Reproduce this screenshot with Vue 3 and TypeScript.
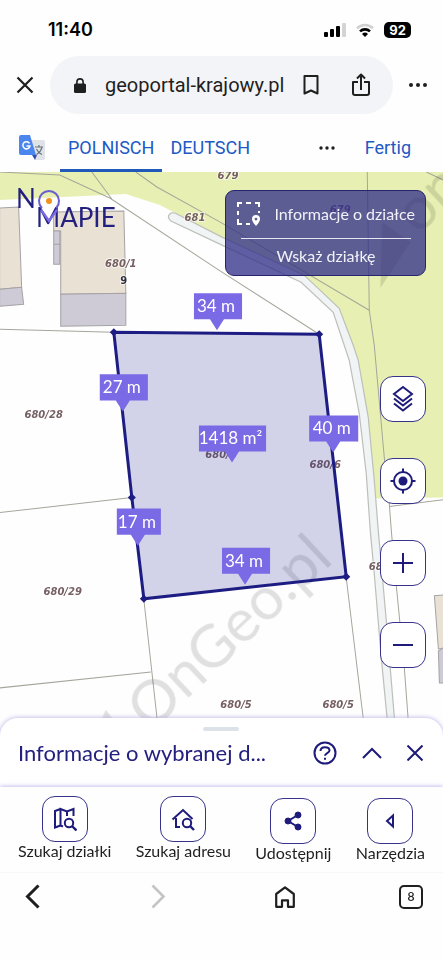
<script setup lang="ts">
interface Measure {
  text: string
  x: number
  y: number
  w: number
  tip: number
}

interface ParcelLabel {
  text: string
  x: number
  y: number
}

const measures: Measure[] = [
  { text: '34 m', x: 194, y: 293, w: 48, tip: 217 },
  { text: '27 m', x: 100, y: 374, w: 48, tip: 123 },
  { text: '1418 m²', x: 199, y: 425, w: 67, tip: 232 },
  { text: '40 m', x: 309, y: 415, w: 49, tip: 333 },
  { text: '17 m', x: 117, y: 508, w: 44, tip: 138 },
  { text: '34 m', x: 222, y: 547, w: 48, tip: 245 },
]

const parcels: ParcelLabel[] = [
  { text: '679', x: 228, y: 179 },
  { text: '679', x: 340, y: 213 },
  { text: '681', x: 195, y: 221 },
  { text: '680/1', x: 121, y: 267 },
  { text: '680/28', x: 44, y: 418 },
  { text: '680/6', x: 221, y: 457 },
  { text: '680/6', x: 325, y: 467 },
  { text: '680/29', x: 63, y: 594 },
  { text: '680/5', x: 236, y: 707 },
  { text: '680/5', x: 338, y: 707 },
  { text: '681', x: 379, y: 569 },
]

const corners: [number, number][] = [
  [114, 332],
  [319, 334],
  [346, 576],
  [144, 598],
  [132, 497],
]

const outline = corners.map((c) => c.join(',')).join(' ')
const tipPath = (m: Measure) =>
  `M${m.x} ${m.y}h${m.w}v26H${m.tip + 7}L${m.tip} ${m.y + 37}L${m.tip - 7} ${m.y + 26}H${m.x}Z`
</script>

<template>
  <div class="screen">
    <header class="browser-top">
      <div class="status">
        <span class="clock">11:40</span>
        <div class="signals">
          <svg width="22" height="14" viewBox="0 0 22 14" aria-hidden="true">
            <rect x="0" y="9" width="4" height="5" rx="1" />
            <rect x="6" y="6" width="4" height="8" rx="1" />
            <rect x="12" y="3" width="4" height="11" rx="1" />
            <rect x="18" y="0" width="4" height="14" rx="1" fill="#d4d4d4" />
          </svg>
          <svg width="18" height="14" viewBox="0 0 18 14" aria-hidden="true">
            <path d="M1 5.2a11.5 11.5 0 0 1 16 0" fill="none" stroke="#d0d0d0" stroke-width="2.6" />
            <path d="M4 8.4a7.2 7.2 0 0 1 10 0" fill="none" stroke="#000" stroke-width="2.6" />
            <path d="M6 11a4.4 4.4 0 0 1 6 0l-3 3z" />
          </svg>
          <span class="battery">92</span>
        </div>
      </div>

      <div class="address-row">
        <button class="plain" type="button" aria-label="Zamknij">
          <svg width="18" height="18" viewBox="0 0 18 18" fill="none" stroke="#1f1f1f" stroke-width="2.2">
            <path d="M1.5 1.5l15 15M16.5 1.5l-15 15" />
          </svg>
        </button>
        <div class="address">
          <svg width="12" height="15" viewBox="0 0 12 15" aria-hidden="true">
            <rect x="0" y="5.5" width="12" height="9.5" rx="1.5" fill="#1f1f1f" />
            <path d="M2.9 6V4a3.1 3.1 0 0 1 6.2 0v2" fill="none" stroke="#1f1f1f" stroke-width="1.6" />
          </svg>
          <span class="url">geoportal-krajowy.pl</span>
          <button class="plain bookmark" type="button" aria-label="Zakładka">
            <svg width="16" height="20" viewBox="0 0 16 20" fill="none" stroke="#1f1f1f" stroke-width="2">
              <path d="M1.5 1h13v17.5L8 15.5l-6.5 3z" stroke-linejoin="round" />
            </svg>
          </button>
          <button class="plain" type="button" aria-label="Udostępnij stronę">
            <svg width="18" height="24" viewBox="0 0 18 24" fill="none" stroke="#1f1f1f" stroke-width="2">
              <path d="M6 9H1v11a2 2 0 0 0 2 2h12a2 2 0 0 0 2-2V9h-5M9 17V2M5 5.5l4-4 4 4" stroke-linejoin="round" />
            </svg>
          </button>
        </div>
        <button class="plain" type="button" aria-label="Menu">
          <svg width="18" height="4" viewBox="0 0 18 4" fill="#1f1f1f">
            <circle cx="2" cy="2" r="2" /><circle cx="9" cy="2" r="2" /><circle cx="16" cy="2" r="2" />
          </svg>
        </button>
      </div>

      <div class="translate">
        <svg width="26" height="26" viewBox="0 0 26 26" aria-hidden="true">
          <path d="M10 5h14a2 2 0 0 1 2 2v16a2 2 0 0 1-2 2h-8z" fill="#dfe2e6" />
          <path d="M13 20h5l-2 5z" fill="#3050b8" />
          <path d="M2 0h9l6 20H2a2 2 0 0 1-2-2V2a2 2 0 0 1 2-2z" fill="#4a86ee" />
          <path d="M10.5 8.3A3.6 3.6 0 1 0 11 11H7.5" fill="none" stroke="#fff" stroke-width="1.5" />
          <path d="M16 12h8M20 10v2M23 12c-1 4-3 6-5.5 7.5M17.5 14c1 2.5 3 4.5 5.5 5.5" fill="none" stroke="#68767e" stroke-width="1.2" />
        </svg>
        <div class="languages">
          <button class="lang active" type="button">POLNISCH</button>
          <button class="lang" type="button">DEUTSCH</button>
        </div>
        <button class="plain more" type="button" aria-label="Opcje tłumaczenia">
          <svg width="16" height="4" viewBox="0 0 16 4" fill="#1f1f1f">
            <circle cx="2" cy="2" r="1.7" /><circle cx="8" cy="2" r="1.7" /><circle cx="14" cy="2" r="1.7" />
          </svg>
        </button>
        <button class="done" type="button">Fertig</button>
      </div>
    </header>

    <main class="map">
      <svg class="map-canvas" viewBox="0 172 443 562" preserveAspectRatio="xMidYMin slice" role="img" aria-label="Mapa działek">
        <rect x="0" y="172" width="443" height="562" fill="#fefefe" />
        <path d="M0 172H443V497L376 498L374 480L368 417L358 360L353 345L339 308L304 275L222 237L160 205L126 194L0 200Z" fill="#e7f0b2" />
        <path d="M222 237L304 275L339 308L353 345L358 360L368 417L374 480L378 530L386 620L396 740H389L381 657L374 573L370 530L366 473L359 413L349 360L344 345L333 312L301 282L222 245L171 221Q166 217 171 213Q174 212 177 214Z" fill="#f0f4f4" stroke="#bdbfb9" stroke-width="1.2" />

        <g stroke="#a5a3a5" stroke-width="1">
          <path d="M0 208L19 207L22 287L0 289Z" fill="#e9e1d3" />
          <path d="M0 289L22 287L24 304L0 306Z" fill="#cecad6" />
          <path d="M54 212L124 211L126 293L61 294V231H54Z" fill="#e9e1d3" />
          <path d="M54 231H60V264H54ZM54 244H60M61 294L126 293V325L61 326Z" fill="#cecad6" />
          <path d="M434 595L444 594V648H438Z" fill="#e9e1d3" />
          <path d="M438 650L444 646V682H439Z" fill="#cecad6" />
        </g>

        <g fill="none" stroke="#a5a69b" stroke-width="1">
          <path d="M0 172L60 175L110 198L222 272L319 334" />
          <path d="M92 172L112 199M136 172L157 187L222 223L369 310" />
          <path d="M367 172L369 310L374 345L384 457L389 503L391 530L396 585L404 667L409 734" />
          <path d="M426 172L443 180M389 506L443 499" />
          <path d="M0 329L114 332M0 512L132 497M0 687L151 671M144 599L159 734M346 577L365 734" />
        </g>

        <g class="watermark">
          <text transform="translate(151 732) rotate(-43)">OnGeo.pl</text>
          <text transform="translate(418 236) rotate(-43)">onGeo.pl</text>
          <path d="M106 709L126 734H94ZM382 222L410 242L380 288Z" />
        </g>

        <g class="parcel-labels">
          <text v-for="(p, i) in parcels" :key="i" :x="p.x" :y="p.y">{{ p.text }}</text>
          <text class="house" x="124" y="284">9</text>
        </g>

        <polygon :points="outline" fill="#24248f" fill-opacity="0.2" stroke="#1c1c82" stroke-width="3" />
        <path
          v-for="c in corners"
          :key="c.join()"
          :d="`M${c[0] - 4} ${c[1]}l4-4 4 4-4 4z`"
          fill="#1c1c82"
        />

        <g v-for="(m, i) in measures" :key="i">
          <path :d="tipPath(m)" fill="#7b6ae6" />
          <text class="measure" :x="m.x + m.w / 2 - 2" :y="m.y + 19">{{ m.text }}</text>
        </g>
      </svg>

      <svg class="logo" width="102" height="38" viewBox="0 0 102 38" role="img" aria-label="No Mapie">
        <text x="-2" y="18">N</text>
        <text x="18" y="37">MAPIE</text>
        <path d="M23.5 20.5L31 31L38.5 20.5" fill="none" stroke="#7b6ae6" stroke-width="2.4" />
        <path d="M23.5 17.5A10 10 0 1 1 38.5 17.5" fill="none" stroke="#6a5ed0" stroke-width="2" />
        <circle cx="31" cy="11" r="3" fill="#f2921d" />
      </svg>

      <button class="pick-panel" type="button">
        <span class="pick-title">
          <svg width="24" height="24" viewBox="0 0 24 24" fill="none" stroke="#fff" stroke-width="2" aria-hidden="true">
            <path d="M1 5V1h4M9 1h5M18 1h4v4M1 9v4M1 17v5h4M9 22h4M22 9v2" />
            <path d="M19 13a4 4 0 0 1 4 4c0 3-4 7-4 7s-4-4-4-7a4 4 0 0 1 4-4zm0 2.7a1.4 1.4 0 1 0 0 2.8 1.4 1.4 0 0 0 0-2.8z" fill="#fff" fill-rule="evenodd" stroke="none" />
          </svg>
          <span>Informacje o działce</span>
        </span>
        <span class="pick-hint">Wskaż działkę</span>
      </button>

      <div class="controls">
        <button class="tile" type="button" aria-label="Warstwy">
          <svg width="22" height="28" viewBox="0 0 22 28" fill="none" stroke="#1e1b7b" stroke-width="2">
            <path d="M11 2l9 7-9 7-9-7zM2 13.5l9 7 9-7M2 18.5l9 7 9-7" />
          </svg>
        </button>
        <button class="tile" type="button" aria-label="Moja lokalizacja">
          <svg width="26" height="26" viewBox="0 0 26 26" fill="none" stroke="#1e1b7b" stroke-width="2">
            <circle cx="13" cy="13" r="9" /><circle cx="13" cy="13" r="4.5" fill="#1e1b7b" stroke="none" />
            <path d="M13 0.5v4M13 21.5v4M0.5 13h4M21.5 13h4" />
          </svg>
        </button>
        <button class="tile" type="button" aria-label="Przybliż">
          <svg width="20" height="20" viewBox="0 0 20 20" stroke="#1e1b7b" stroke-width="2"><path d="M0 10h20M10 0v20" /></svg>
        </button>
        <button class="tile" type="button" aria-label="Oddal">
          <svg width="20" height="20" viewBox="0 0 20 20" stroke="#1e1b7b" stroke-width="2"><path d="M0 10h20" /></svg>
        </button>
      </div>
    </main>

    <section class="sheet">
      <div class="handle"></div>
      <div class="sheet-row">
        <h2>Informacje o wybranej d...</h2>
        <div class="sheet-actions">
          <button class="plain" type="button" aria-label="Pomoc">
            <svg width="24" height="24" viewBox="0 0 24 24" fill="none" stroke="#1e1b7b" stroke-width="2">
              <circle cx="12" cy="12" r="10.5" />
              <path d="M7.5 10c0-2.3 2-3.7 4.5-3.7s4.5 1.3 4.5 3.3c0 2.700-4.500 2.400-4.500 5.200M12 16.800v2" />
            </svg>
          </button>
          <button class="plain" type="button" aria-label="Rozwiń">
            <svg width="20" height="12" viewBox="0 0 20 12" fill="none" stroke="#1e1b7b" stroke-width="2"><path d="M1 11l9-9 9 9" /></svg>
          </button>
          <button class="plain" type="button" aria-label="Zamknij panel">
            <svg width="16" height="16" viewBox="0 0 16 16" fill="none" stroke="#1e1b7b" stroke-width="2"><path d="M0.5 0.5l15 15M15.5 0.5l-15 15" /></svg>
          </button>
        </div>
      </div>
    </section>

    <nav class="toolbar" aria-label="Narzędzia mapy">
      <button class="tool" type="button">
        <span class="tile">
          <svg width="24" height="24" viewBox="0 0 24 24" fill="none" stroke="#1e1b7b" stroke-width="2">
            <path d="M7.5 2L2 4v16.5l5.5-2V2l6.5 2.5L20.5 2v7M7.5 18.5L10 19.5M14 4.5V9" />
            <circle cx="16" cy="16" r="4.2" /><path d="M19 19l4.5 4.5" stroke-width="2.4" />
          </svg>
        </span>
        Szukaj działki
      </button>
      <button class="tool" type="button">
        <span class="tile">
          <svg width="24" height="24" viewBox="0 0 24 24" fill="none" stroke="#1e1b7b" stroke-width="2">
            <path d="M9 20H5v-9M1.5 12.5L12 3l9.5 9" />
            <circle cx="16" cy="16" r="4.2" /><path d="M19 19l4 4" stroke-width="2.4" />
          </svg>
        </span>
        Szukaj adresu
      </button>
      <button class="tool low" type="button">
        <span class="tile">
          <svg width="18" height="20" viewBox="0 0 18 20" fill="#1e1b7b" stroke="#1e1b7b">
            <path d="M14 4L4 10l10 6" fill="none" stroke-width="2" />
            <circle cx="14" cy="4" r="3" /><circle cx="4" cy="10" r="3" /><circle cx="14" cy="16" r="3" />
          </svg>
        </span>
        Udostępnij
      </button>
      <button class="tool low" type="button">
        <span class="tile">
          <svg width="10" height="16" viewBox="0 0 10 16" fill="none" stroke="#1e1b7b" stroke-width="2"><path d="M8 2.5v11L2 8z" /></svg>
        </span>
        Narzędzia
      </button>
    </nav>

    <footer class="browser-bottom">
      <button class="plain nav" type="button" aria-label="Wstecz">
        <svg width="15" height="25" viewBox="0 0 15 25" fill="none" stroke="#1f1f1f" stroke-width="3"><path d="M13.5 1.5L2.5 12.5l11 11" /></svg>
      </button>
      <button class="plain nav" type="button" aria-label="Dalej" disabled>
        <svg width="15" height="25" viewBox="0 0 15 25" fill="none" stroke="#c4c4c4" stroke-width="2.6"><path d="M1.5 1.5l11 11-11 11" /></svg>
      </button>
      <button class="plain nav" type="button" aria-label="Strona główna">
        <svg width="20" height="22" viewBox="0 0 20 22" fill="none" stroke="#1f1f1f" stroke-width="2.2" stroke-linejoin="round">
          <path d="M1.2 8L10 1.3 18.8 8v12.8H13v-6.5H7v6.5H1.2z" />
        </svg>
      </button>
      <button class="nav tabs" type="button" aria-label="Karty: 8">8</button>
    </footer>
  </div>
</template>

<style>
body {
  margin: 0;
  background: #fefefe;
}
</style>

<style scoped>
.screen {
  display: flex;
  flex-direction: column;
  min-height: 100vh;
  background: #fefefe;
  color: #1f1f1f;
  font-family: Lato, sans-serif;
}

button {
  font: inherit;
  color: inherit;
  margin: 0;
  padding: 0;
  border: 0;
  background: none;
  cursor: pointer;
}

svg {
  display: block;
}

.plain {
  display: flex;
  flex: none;
}

.status {
  display: flex;
  align-items: center;
  justify-content: space-between;
  height: 56px;
  padding: 4px 32px 0 48px;
  box-sizing: border-box;
}

.clock {
  font: 600 18px/24px Inter, sans-serif;
  color: #000;
}

.signals {
  display: flex;
  align-items: center;
  gap: 10px;
}

.battery {
  padding: 0 5px;
  border-radius: 5px;
  background: #000;
  color: #fff;
  font: 700 13px/16px Inter, sans-serif;
}

.address-row {
  display: flex;
  align-items: center;
  gap: 16px;
  padding: 0 16px;
}

.address {
  display: flex;
  flex: 1;
  align-items: center;
  box-sizing: border-box;
  min-width: 0;
  height: 58px;
  padding: 0 23px 0 24px;
  border-radius: 29px;
  background: #f3f4f7;
}

.url {
  flex: 1;
  margin-left: 19px;
  font: 400 20px/28px Roboto, sans-serif;
}

.bookmark {
  margin-right: 33px;
}

.translate {
  display: flex;
  align-items: center;
  box-sizing: border-box;
  height: 58px;
  padding: 10px 32px 0 19px;
  font: 400 18px/24px Roboto, sans-serif;
  color: #2059c4;
}

.languages {
  display: flex;
  align-self: stretch;
  flex: 1;
  margin-left: 15px;
}

.lang {
  padding: 3px 8px 0;
  border-bottom: 3px solid transparent;
}

.lang.active {
  border-color: #2059b8;
}

.more {
  margin-right: 30px;
}

.map {
  position: relative;
  flex: 1;
  min-height: 480px;
  overflow: hidden;
}

.map-canvas {
  position: absolute;
  inset: 0;
  width: 100%;
  height: 100%;
}

.watermark {
  font-family: Lato, sans-serif;
  font-size: 60px;
  fill: #000;
  opacity: 0.12;
}

.parcel-labels {
  font: italic bold 10px "DejaVu Sans", sans-serif;
  text-anchor: middle;
  fill: #765f62;
  stroke: #fff;
  stroke-opacity: 0.6;
  stroke-width: 2px;
  paint-order: stroke;
}

.house {
  font-style: normal;
  fill: #303040;
}

.measure {
  font: 400 17px Lato, sans-serif;
  text-anchor: middle;
  fill: #fff;
}

.logo {
  position: absolute;
  top: 18px;
  left: 18px;
  overflow: visible;
  font: 400 26px Lato, sans-serif;
  fill: #24207f;
  stroke-linecap: round;
}

.pick-panel {
  position: absolute;
  top: 18px;
  right: 17px;
  box-sizing: border-box;
  width: 201px;
  padding: 9px 10px 9px 11px;
  border: 1px solid #28246e;
  border-radius: 9px;
  background: rgba(49, 46, 135, 0.76);
  color: #f2f1fa;
  font-size: 16px;
  line-height: 20px;
}

.pick-title {
  display: flex;
  align-items: center;
  justify-content: space-between;
  height: 27px;
}

.pick-hint {
  display: block;
  margin: 11px 4px 0;
  padding-top: 7px;
  border-top: 1px solid #e8e6f5;
}

.controls {
  position: absolute;
  top: 204px;
  right: 17px;
  display: grid;
  gap: 36px;
}

.tile {
  display: flex;
  align-items: center;
  justify-content: center;
  box-sizing: border-box;
  width: 46px;
  height: 46px;
  border: 1px solid #37338a;
  border-radius: 13px;
  background: #fff;
}

.sheet {
  position: relative;
  margin-top: -17px;
  padding: 9px 20px 18px 18px;
  border-radius: 18px 18px 0 0;
  background: #fff;
  box-shadow: 0 0 5px #b3abe6;
}

.handle {
  width: 36px;
  height: 4px;
  margin: 0 auto;
  border-radius: 2px;
  background: #dde2e8;
}

.sheet-row {
  display: flex;
  align-items: center;
  justify-content: space-between;
  margin-top: 6px;
}

h2 {
  margin: 0;
  font-size: 22px;
  font-weight: 400;
  line-height: 32px;
  color: #24207f;
}

.sheet-actions {
  display: flex;
  align-items: center;
  gap: 25px;
}

.toolbar {
  position: relative;
  display: flex;
  align-items: flex-start;
  justify-content: space-between;
  padding: 9px 18px 10px;
  background: #fefefe;
  box-shadow: 0 -1px 4px #c5bfee;
}

.tool {
  display: flex;
  flex-direction: column;
  align-items: center;
  font-size: 16px;
  line-height: 18px;
}

.tool.low {
  padding-top: 2px;
}

.browser-bottom {
  position: relative;
  display: flex;
  align-items: center;
  justify-content: space-between;
  padding: 11px 20px 51px;
  border-top: 1px solid #f8f8f8;
  background: #fefefe;
}

.nav {
  justify-content: center;
  box-sizing: border-box;
  width: 24px;
}

.tabs {
  height: 24px;
  border: 2px solid #1f1f1f;
  border-radius: 5px;
  font: 500 12px/20px Inter, sans-serif;
}
</style>
